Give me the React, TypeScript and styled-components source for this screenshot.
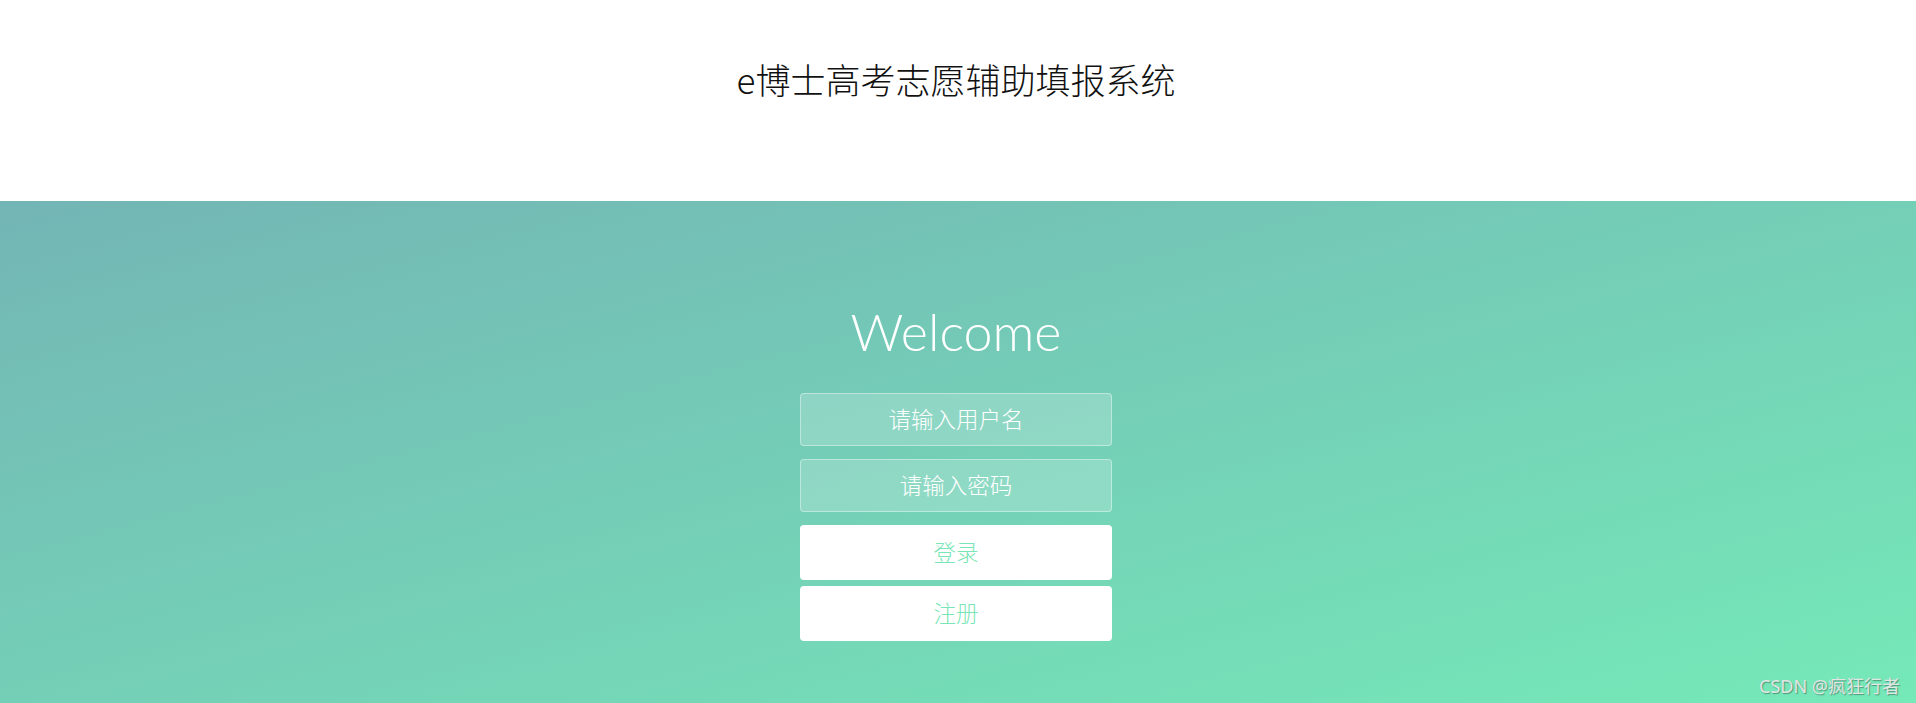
import styled, { createGlobalStyle } from "styled-components";

const GlobalStyle = createGlobalStyle`
  html, body {
    margin: 0;
    padding: 0;
    overflow: hidden;
  }
  body {
    font-family: "Lato", "Noto Sans CJK SC", sans-serif;
    background: #fff;
  }
  * {
    box-sizing: border-box;
  }
`;

const Page = styled.div`
  display: flex;
  flex-direction: column;
  width: 100%;
  height: 703px;
  position: relative;
`;

const Header = styled.header`
  display: flex;
  justify-content: center;
  align-items: flex-start;
  height: 201px;
  padding: 56px 4px 0 0;
  background: #fff;
`;

const Title = styled.h2`
  margin: 0;
  font-family: "Noto Sans CJK SC Light", "Liberation Sans", "Noto Sans CJK SC", sans-serif;
  font-size: 35px;
  line-height: 45px;
  font-weight: 300;
  color: #111;
`;

const Wrapper = styled.section`
  flex: 1;
  display: flex;
  flex-direction: column;
  align-items: center;
  padding: 99px 4px 0 0;
  background: linear-gradient(to bottom right, #73b5b5 0%, #75e9b8 100%);
`;

const Welcome = styled.h1`
  margin: 0 0 31px;
  font-family: "Lato", sans-serif;
  font-size: 52px;
  line-height: 62px;
  font-weight: 300;
  color: #fff;
`;

const Form = styled.form`
  display: flex;
  flex-direction: column;
  align-items: center;
  width: 312px;
`;

const Field = styled.input`
  appearance: none;
  outline: 0;
  width: 312px;
  height: 53px;
  margin: 0 0 13px;
  padding: 0 18px 4px;
  border: 1px solid rgba(255, 255, 255, 0.4);
  border-radius: 4px;
  background-color: rgba(255, 255, 255, 0.2);
  font-family: "Noto Sans CJK SC", sans-serif;
  font-size: 22.5px;
  font-weight: 300;
  color: #fff;
  text-align: center;
  &::placeholder {
    color: #fff;
    opacity: 1;
  }
`;

const Button = styled.button<{ $gap?: number }>`
  appearance: none;
  width: 312px;
  height: 55px;
  margin-bottom: ${(p) => p.$gap ?? 0}px;
  padding: 0 0 4px;
  border: 0;
  border-radius: 4px;
  background: #fff;
  font-family: "Noto Sans CJK SC", sans-serif;
  font-size: 22.5px;
  font-weight: 300;
  color: #78e6b6;
  cursor: pointer;
`;

const Watermark = styled.span`
  position: absolute;
  right: 16px;
  bottom: 5px;
  font-family: "Noto Sans", "Noto Sans CJK SC", sans-serif;
  font-size: 18px;
  line-height: 24px;
  color: #e2e6e4;
  text-shadow: 1px 1px 1px rgba(0, 0, 0, 0.35);
`;

export default function App() {
  return (
    <>
      <GlobalStyle />
      <Page>
        <Header>
          <Title>e博士高考志愿辅助填报系统</Title>
        </Header>
        <Wrapper>
          <Welcome>Welcome</Welcome>
          <Form onSubmit={(e) => e.preventDefault()}>
            <Field type="text" placeholder="请输入用户名" />
            <Field type="password" placeholder="请输入密码" />
            <Button type="submit" $gap={6}>
              登录
            </Button>
            <Button type="button">注册</Button>
          </Form>
        </Wrapper>
        <Watermark>CSDN @疯狂行者</Watermark>
      </Page>
    </>
  );
}
